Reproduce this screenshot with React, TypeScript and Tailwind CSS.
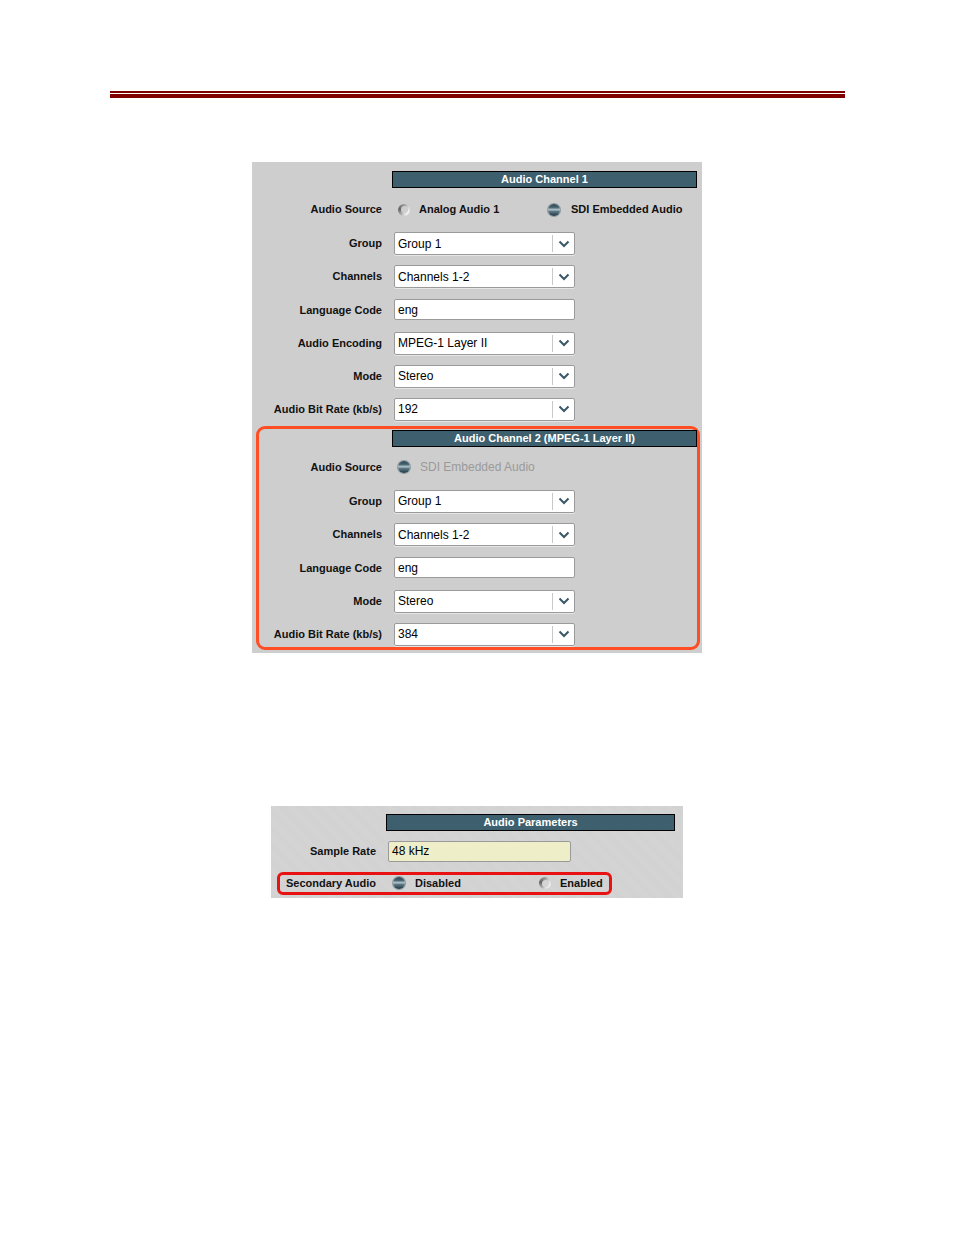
import type { ReactNode } from 'react'

const font = { fontFamily: '"Liberation Sans", Arial, sans-serif' }

function Chevron() {
  return (
    <svg width="12" height="8" viewBox="0 0 12 8" className="block">
      <path d="M1.5 1.5 L6 6 L10.5 1.5" fill="none" stroke="#3a5867" strokeWidth="2" />
    </svg>
  )
}

function Select({ value }: { value: string }) {
  return (
    <div className="flex h-[23px] w-[181px] items-stretch rounded-[2px] border border-[#9a9a9a] bg-white shadow-[0_1px_0_#e6e6e6]">
      <span className="flex flex-1 items-center pl-[3px] text-[12px] text-black">{value}</span>
      <span className="my-[2px] w-px bg-[#c8c8c8]" />
      <span className="flex w-[21px] items-center justify-center">
        <Chevron />
      </span>
    </div>
  )
}

function TextBox({ value }: { value: string }) {
  return (
    <div className="flex h-[21px] w-[181px] items-center rounded-[2px] border border-[#9a9a9a] bg-white pl-[3px] text-[12px] text-black">
      {value}
    </div>
  )
}

function Radio({ checked, bg = 'bg-[#cecece]' }: { checked: boolean; bg?: string }) {
  return checked ? (
    <span className="relative inline-block h-[12px] w-[12px] shrink-0 rounded-full bg-[linear-gradient(180deg,#2c4756_0%,#46636f_28%,#b4c5cd_48%,#5d7884_62%,#1f3644_100%)] shadow-[0_0_0_1px_#8d9aa1]" />
  ) : (
    <span className="relative inline-flex h-[12px] w-[12px] shrink-0 items-center justify-center rounded-full bg-[conic-gradient(#9a9a9a_0deg,#d8d8d8_60deg,#f4f4f4_120deg,#e2e2e2_170deg,#a8a8a8_220deg,#646464_280deg,#9a9a9a_360deg)]">
      <span className={`h-[7px] w-[7px] rounded-full ${bg}`} />
    </span>
  )
}

function Header({ children }: { children: ReactNode }) {
  return (
    <div className="flex h-[17px] items-center justify-center border border-black bg-[#3e606e] text-[11px] font-bold text-white">
      {children}
    </div>
  )
}

function Row({ label, labelW, children }: { label: string; labelW: string; children: ReactNode }) {
  return (
    <div className="flex h-[23px] items-center">
      <span className={`${labelW} shrink-0 text-right text-[11px] font-bold text-[#111]`}>{label}</span>
      <div className="ml-[12px] flex items-center">{children}</div>
    </div>
  )
}

export default function App() {
  return (
    <div className="min-h-[1235px] w-[954px] bg-white" style={font}>
      {/* page rule */}
      <div className="ml-[110px] w-[735px] pt-[91px]">
        <div className="h-[2px] bg-[#800000]" />
        <div className="mt-px h-[4px] bg-[#800000]" />
      </div>

      {/* audio channels panel */}
      <div className="ml-[252px] mt-[64px] w-[450px] bg-[#cecece] pb-[3px] pt-[9px]">
        <div className="ml-[140px] mr-[5px]">
          <Header>Audio Channel 1</Header>
        </div>

        <div className="mt-[10px] h-[22px]">
          <Row label="Audio Source" labelW="w-[130px]">
            <div className="flex items-center pl-[4px]">
              <Radio checked={false} />
              <span className="ml-[9px] w-[129px] text-[11px] font-bold text-[#111]">Analog Audio 1</span>
              <Radio checked />
              <span className="ml-[11px] text-[11px] font-bold text-[#111]">SDI Embedded Audio</span>
            </div>
          </Row>
        </div>

        <div className="mt-[12px] flex flex-col gap-[10.2px]">
          <Row label="Group" labelW="w-[130px]"><Select value="Group 1" /></Row>
          <Row label="Channels" labelW="w-[130px]"><Select value="Channels 1-2" /></Row>
          <Row label="Language Code" labelW="w-[130px]"><TextBox value="eng" /></Row>
          <Row label="Audio Encoding" labelW="w-[130px]"><Select value="MPEG-1 Layer II" /></Row>
          <Row label="Mode" labelW="w-[130px]"><Select value="Stereo" /></Row>
          <Row label="Audio Bit Rate (kb/s)" labelW="w-[130px]"><Select value="192" /></Row>
        </div>

        <div className="ml-[4px] mr-[2px] mt-[5px] rounded-[9px] border-[3px] border-[#ff4d24] pb-px pt-px">
          <div className="ml-[133px]">
            <Header>Audio Channel 2 (MPEG-1 Layer II)</Header>
          </div>

          <div className="mt-[9px] h-[22px]">
            <Row label="Audio Source" labelW="w-[123px]">
              <div className="flex items-center pl-[4px]">
                <Radio checked />
                <span className="ml-[10px] text-[12px] text-[#9a9a9a]">SDI Embedded Audio</span>
              </div>
            </Row>
          </div>

          <div className="mt-[12px] flex flex-col gap-[10.2px]">
            <Row label="Group" labelW="w-[123px]"><Select value="Group 1" /></Row>
            <Row label="Channels" labelW="w-[123px]"><Select value="Channels 1-2" /></Row>
            <Row label="Language Code" labelW="w-[123px]"><TextBox value="eng" /></Row>
            <Row label="Mode" labelW="w-[123px]"><Select value="Stereo" /></Row>
            <Row label="Audio Bit Rate (kb/s)" labelW="w-[123px]"><Select value="384" /></Row>
          </div>
        </div>
      </div>

      {/* audio parameters panel */}
      <div className="ml-[271px] mt-[153px] h-[92px] w-[412px] bg-[#d5d5d5] bg-[image:repeating-linear-gradient(45deg,rgba(0,0,0,0.02)_0px,rgba(0,0,0,0.02)_1px,transparent_1px,transparent_2px)] pt-[8px]">
        <div className="ml-[115px] w-[289px]">
          <Header>Audio Parameters</Header>
        </div>

        <div className="mt-[10px] flex h-[21px] items-center">
          <span className="w-[105px] shrink-0 text-right text-[11px] font-bold text-[#111]">Sample Rate</span>
          <div className="ml-[12px] flex h-[21px] w-[183px] items-center rounded-[2px] border border-[#9a9a9a] bg-[#eeeec8] pl-[3px] text-[12px] text-black">
            48 kHz
          </div>
        </div>

        <div className="ml-[6px] mt-[10px] flex h-[23px] w-[335px] items-center rounded-[6px] border-[3px] border-[#e81212] pl-[5px]">
          <span className="w-[91px] shrink-0 text-right text-[11px] font-bold text-[#111]">Secondary Audio</span>
          <span className="ml-[17px] flex items-center">
            <Radio checked />
          </span>
          <span className="ml-[10px] w-[124px] text-[11px] font-bold text-[#111]">Disabled</span>
          <Radio checked={false} bg="bg-[#d5d5d5]" />
          <span className="ml-[9px] text-[11px] font-bold text-[#111]">Enabled</span>
        </div>
      </div>
    </div>
  )
}
